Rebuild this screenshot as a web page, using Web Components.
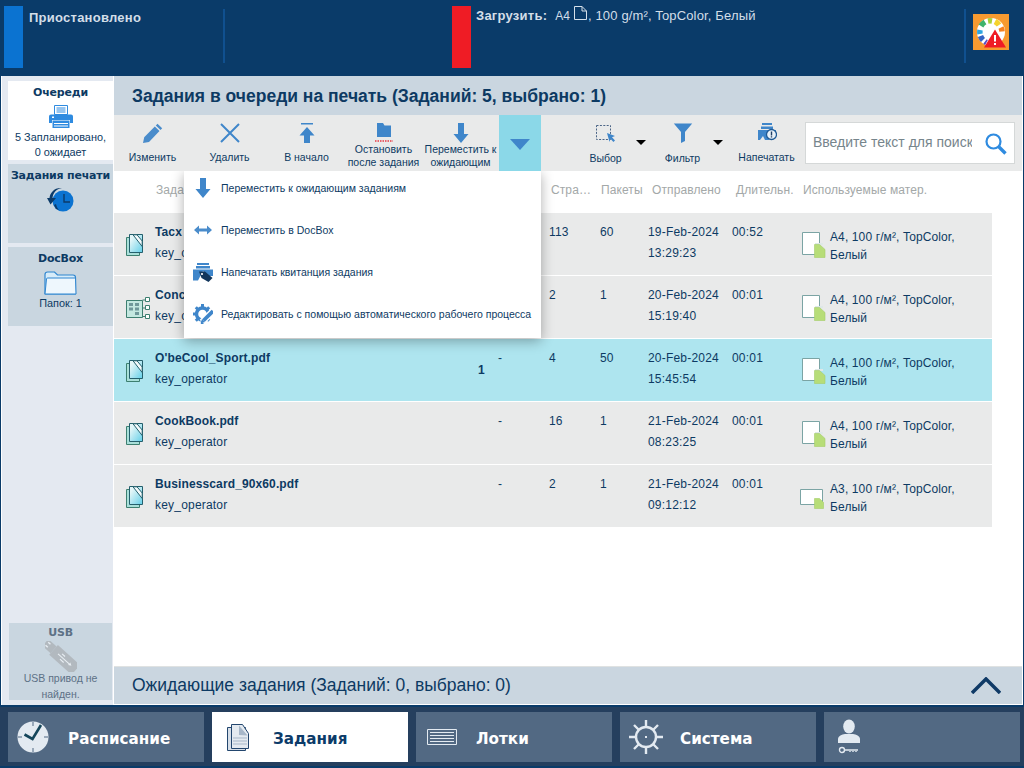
<!DOCTYPE html>
<html lang="ru">
<head>
<meta charset="utf-8">
<title>Задания</title>
<style>
  html, body { margin: 0; height: 100%; }
  body {
    width: 1024px; height: 768px; overflow: hidden;
    background: #0a3b69;
    display: flex; flex-direction: column;
    font-family: "Liberation Sans", Arial, sans-serif;
    color: #0d3a63;
  }
</style>
</head>
<body>
<status-bar></status-bar>
<main-area>
  <side-nav slot="side">
    <side-card active>
      <span slot="title">Очереди</span>
      <app-icon name="queue" w="24" h="23"></app-icon>
      <span slot="desc">5 Запланировано,<br>0 ожидает</span>
    </side-card>
    <side-card>
      <span slot="title">Задания печати</span>
      <app-icon name="history" w="27" h="24"></app-icon>
    </side-card>
    <side-card>
      <span slot="title">DocBox</span>
      <app-icon name="folder" w="33" h="24"></app-icon>
      <span slot="desc">Папок: 1</span>
    </side-card>
    <side-card usb>
      <span slot="title">USB</span>
      <app-icon name="usb" w="32" h="31"></app-icon>
      <span slot="desc">USB привод не найден.</span>
    </side-card>
  </side-nav>
  <job-panel></job-panel>
</main-area>
<nav-bar>
  <nav-tab icon="clock" label="Расписание"></nav-tab>
  <nav-tab icon="jobs" label="Задания" active></nav-tab>
  <nav-tab icon="trays" label="Лотки"></nav-tab>
  <nav-tab icon="wheel" label="Система"></nav-tab>
  <nav-tab icon="user" label=""></nav-tab>
</nav-bar>

<script>
const ICONS = {
  pencil: [20, 20, `<path fill="#4a8ccb" d="M14.5 .8l4.700 4.400-1.700 1.800-4.700-4.400zM11.800 3.600l4.700 4.400L6 19 0 20l1.200-5.800z"/>`],
  cross: [20, 20, `<path stroke="#3f86ca" stroke-width="2" fill="none" d="M1 1l18 18M19 1L1 19"/>`],
  top: [16, 20, `<path fill="#3f86ca" d="M2 0h12v1.500H2zM8 4l7.500 8.500H11V20H5v-7.500H.5z"/>`],
  stop: [18, 20, `<path fill="#3f86ca" d="M2 0h6l1.500 2.500H16V14H2z"/><path fill="#e9eaea" d="M9.500 1h6.500v1H9.500z"/><path stroke="#e8656c" stroke-width="2" stroke-dasharray="1.500 1" d="M0 18h18"/>`],
  down: [16, 20, `<path fill="#3f86ca" d="M5 0h6v11h4.500L8 20 .5 11H5z"/>`],
  select: [20, 20, `<rect x=".5" y="2.500" width="14" height="14" fill="none" stroke="#4a6486" stroke-dasharray="2 1.400"/><path fill="#3f86ca" d="M11 10l8 3-3 1.200 3 3.300-1.600 1.500-3-3.300L13.500 19z"/>`],
  filter: [20, 20, `<path fill="#3f86ca" d="M.8 .5h18.400L12 9v9l-4 2V9z"/>`],
  print: [20, 20, `<path fill="#3f86ca" d="M5 0h10v2H5zM4 3.500h12V6H4zM1 7h18v3a6 6 0 0 0-7 7H8l-2-4-3 4H1z"/><circle cx="14.500" cy="11.500" r="5" fill="#e8f1f8" stroke="#1f5a95" stroke-width="1.300"/><path stroke="#1f3f66" stroke-width="1.400" d="M14.500 8.500v4M14.500 13.200v1.200"/>`],
  search: [22, 22, `<circle cx="8.500" cy="8.500" r="7" fill="none" stroke="#2f8be0" stroke-width="2.200"/><path stroke="#2f8be0" stroke-width="3.400" d="M13.500 13.500l7 7"/>`],
  move: [18, 10, `<path fill="#4a8ccb" d="M0 5l5-4.500V3.500h8V.500L18 5l-5 4.500V6.500H5v3z"/>`],
  receipt: [20, 19, `<path fill="#3f86ca" d="M4 0h12v2H4zM3 3h14v2.500H3zM0 6.500h20V13H15l-5-5-5 9.500H0z"/><path fill="#12365c" d="M6 8.500h6l7.500 6.500-4 4L8.500 15z"/><circle cx="9" cy="11" r="1.100" fill="#fff"/>`],
  cog: [20, 20, `<g stroke="#3f86ca" fill="none"><circle cx="9.500" cy="10" r="6" stroke-width="3.400"/><path stroke-width="3" d="M9.500 0v4M9.500 16v4M0 10h4M15 10h4M2.800 3.300l3 3M13.200 13.700l3 3M16.200 3.300l-3 3M5.800 13.700l-3 3"/></g><path stroke="#fff" stroke-width="6.500" d="M20 7L9 18"/><path stroke="#3f86ca" stroke-width="3.800" d="M20 7L10.500 16.500"/><path fill="#3f86ca" d="M9 15l3 3-4.500 1.500z"/>`],
  queue: [24, 23, `<path fill="#fff" stroke="#2f8be0" d="M5.500 .5h13v9h-13z"/><path stroke="#2f8be0" d="M7.500 3h9M7.500 5h9M7.500 7h9"/><path fill="#2f8be0" d="M2 9.500h20a2 2 0 0 1 2 2V18h-3v-3H3v3H0v-6.500a2 2 0 0 1 2-2z"/><path fill="#2f8be0" d="M3.500 15.500h17V23h-17z"/><path fill="#fff" d="M5 18h14v1H5zM5 20.500h14v1H5z"/><rect x="3" y="11.500" width="2" height="1.500" fill="#fff"/>`],
  history: [27, 24, `<circle cx="16" cy="13" r="10.500" fill="#0b73d1"/><path stroke="#0c3b69" stroke-width="1.400" fill="none" d="M17 6v8h6"/><path fill="#0c3b69" d="M15 0c-6 1-9 5-9.500 10H9L3.500 16.500 0 10h2.500C3 5 7 0 13.500 0z"/><path fill="#0c3b69" d="M9 16c.5 3 2 5 3 6l-3-1-2-4z"/>`],
  folder: [33, 24, `<path fill="#d7ecf9" stroke="#2f86d0" stroke-width="1.200" d="M1 3.500c0-1.500 1-2.500 2.500-2.500h7l3 3H29c1.500 0 2.500 1 2.500 2.500V23H1z"/><path fill="#eef7fd" stroke="#2f86d0" d="M1 23l1.500-15c0-.8.500-1 1-1h28l.5 16z"/>`],
  usb: [32, 31, `<g transform="rotate(42 16 15.500)"><rect x="-5" y="11" width="11" height="9" fill="#b2b9bf"/><rect x="6" y="9" width="30" height="13" fill="#b2b9bf"/><path stroke="#e8eef3" stroke-width="1.100" fill="none" d="M12 15.500h15M15 12.800h4M17 18.200h5"/><path fill="#e8eef3" d="M27 13.800l3 1.700-3 1.700zM-3 12.800h3v1.400h-3zM-3 16.800h3v1.400h-3z"/></g>`],
  clock: [32, 32, `<circle cx="16" cy="16" r="15.500" fill="#e3eaf1"/><path stroke="#4f6781" d="M16 1v4M16 27v4M1 16h4M27 16h4"/><path stroke="#14455a" stroke-width="2.600" fill="none" d="M7.500 13.500l8 4.500 8.500-14"/>`],
  jobs: [22, 27, `<path fill="#d7dfe8" stroke="#23466e" d="M.5 3.500h18v23H.5z"/><path fill="#e4eaf0" stroke="#23466e" d="M4.500.5h11l6 9v15h-17z"/><path fill="#a7b7c9" d="M12 1.500l8.500 10-8.500-.5z"/><path stroke="#a7b7c9" d="M6 14h14M6 17h14M6 20h14"/>`],
  trays: [30, 16, `<path fill="none" stroke="#e3eaf1" d="M.5.500h29v15H.5z"/><path stroke="#e3eaf1" d="M3 3.500h24M3 6.500h24M3 9.500h24M3 12.500h24"/>`],
  wheel: [34, 34, `<circle cx="17" cy="17" r="10" fill="none" stroke="#e3eaf1" stroke-width="2.400"/><path stroke="#e3eaf1" stroke-width="2.400" d="M17 0v7M17 27v7M0 17h7M27 17h7M5 5l5 5M24 24l5 5M29 5l-5 5M10 24l-5 5"/><path fill="#e3eaf1" d="M16 16h2v2h-2z"/>`],
  user: [22, 35, `<ellipse cx="11" cy="7.500" rx="5.800" ry="7" fill="#e3eaf1"/><path fill="#e3eaf1" d="M0 24v-4c0-3 4-4.500 7-5h8c3 .5 7 2 7 5v4z"/><circle cx="4" cy="31" r="2.500" fill="none" stroke="#e3eaf1" stroke-width="1.400"/><path stroke="#e3eaf1" stroke-width="1.400" d="M7 31h13M12 33v-1M15 33v-1M18 33v-1"/>`],
  doc: [17, 22, `<defs><linearGradient id="g" x1="0" y1="0" x2="1" y2="1"><stop offset=".2" stop-color="#e4f6f8"/><stop offset="1" stop-color="#62cfe8"/></linearGradient></defs><path fill="#a9e0da" stroke="#3d7f70" d="M.5 3.500h13v18H.5z"/><path fill="url(#g)" stroke="#245f6c" d="M3.500.5h13v18h-13z"/><path stroke="#245f6c" fill="#f5fbfc" d="M7 .8l9.200 11.700V7L11 .8z"/>`],
  flow: [24, 22, `<path fill="#c4e8e0" stroke="#3d7f70" d="M.5 3.500h16v17H.5z"/><path fill="#6f989a" d="M3 6h4v3H3zM9 6h4v3H9zM9 10.500h4v3H9zM3 10.500h4v3H3zM9 15h4v3H9z"/><path fill="#fff" stroke="#3d7f70" d="M19.500.5h4v4h-4zM19.500 8.500h4v4h-4zM19.500 17.500h4v4h-4z"/><path stroke="#3d7f70" d="M16.500 3h3M16.500 11h3M16.500 19.500h3"/>`],
  sheet: [24, 26, `<path fill="#fff" stroke="#7ba4a4" d="M.5.500h17v22H.5z"/><path fill="#dfe8e8" d="M13 11h8v2h-8z"/><path fill="#b7dd78" stroke="#a4cc6a" stroke-width=".6" d="M12.500 12.500h5l5.500 5v8h-10.500z"/>`],
  sheetwide: [25, 21, `<path fill="#fff" stroke="#7ba4a4" d="M.5 1.500h22v15H.5z"/><path fill="#b7dd78" stroke="#a4cc6a" stroke-width=".6" d="M14.500 10.500h5l4 4v6h-9z"/>`],
  page: [13, 14, `<path fill="none" stroke="#d5e0ea" d="M.5.5h7.500l4.500 4.500v8.500H.5zM8 .5v4.500h4.500"/>`],
  gauge: [36, 36, `<rect width="36" height="36" fill="#f79a30"/><circle cx="18" cy="18" r="14" fill="#fff"/><g fill="none" stroke-width="5.500"><path stroke="#2ea5e0" d="M7 20a11.500 11.500 0 0 1 0-4"/><path stroke="#3fb36c" d="M8 12a11.500 11.500 0 0 1 4-4"/><path stroke="#a8d13c" d="M15 7a11.500 11.500 0 0 1 4 0"/><path stroke="#f6d32e" d="M22 7.500a11.500 11.500 0 0 1 4 3.500"/><path stroke="#f58020" d="M28 13.500a11.500 11.500 0 0 1 1 4"/><path stroke="#3564c4" d="M7.500 22a11.500 11.500 0 0 0 2.500 4"/><path stroke="#5a4fc4" d="M12 27.500a11.500 11.500 0 0 0 1.500 1"/></g><path fill="#ef1c25" d="M22 15.500L33 33.500H11z"/><path stroke="#fff" stroke-width="2" d="M22 21v6.500M22 29v2"/>`]
};

function svgIcon(name, w, h) {
  const [vw, vh, body] = ICONS[name];
  return `<svg xmlns="http://www.w3.org/2000/svg" width="${w || vw}" height="${h || vh}" viewBox="0 0 ${vw} ${vh}" style="display:block">${body}</svg>`;
}

class AppIcon extends HTMLElement {
  connectedCallback() {
    const root = this.attachShadow({ mode: 'open' });
    root.innerHTML = `<style>:host { display: block; }</style>` +
      svgIcon(this.getAttribute('name'), this.getAttribute('w'), this.getAttribute('h'));
  }
}
customElements.define('app-icon', AppIcon);

class StatusBar extends HTMLElement {
  connectedCallback() {
    this.attachShadow({ mode: 'open' }).innerHTML = `
      <style>
        :host { display: flex; flex: none; height: 76px; color: #d3dee8; font-size: 13px; box-sizing: border-box; padding-left: 4px; }
        .lamp { width: 19px; height: 62px; margin-top: 6px; flex: none; }
        .blue { background: #0b73d1; }
        .red { background: #ef1c25; }
        .sep { width: 2px; height: 54px; margin-top: 9px; background: #10508f; flex: none; }
        .msg { padding: 11px 0 0 6px; line-height: 14px; font-weight: bold; letter-spacing: .25px; }
        .one { width: 194px; flex: none; }
        .gap { width: 227px; flex: none; }
        .load { width: 488px; flex: none; padding: 9px 0 0 5px; line-height: 14px; display: flex; letter-spacing: .15px; }
        .load b { letter-spacing: .25px; margin-right: 8px; }
        .load i { font-style: normal; font-size: 12px; letter-spacing: 0; }
        .load app-icon { margin: -3px 1px 0 4px; }
        .gauge { margin: 14px 0 0 7px; }
      </style>
      <div class="lamp blue"></div>
      <div class="msg one">Приостановлено</div>
      <div class="sep"></div>
      <div class="gap"></div>
      <div class="lamp red"></div>
      <div class="load"><b>Загрузить:</b><i>A4</i><app-icon name="page"></app-icon><span>, 100 g/m², TopColor, Белый</span></div>
      <div class="sep"></div>
      <app-icon class="gauge" name="gauge"></app-icon>
    `;
  }
}
customElements.define('status-bar', StatusBar);

class MainArea extends HTMLElement {
  connectedCallback() {
    this.attachShadow({ mode: 'open' }).innerHTML = `
      <style>
        :host { display: flex; flex: none; height: 629px; margin: 0 1px 0 1px; background: #fff; padding-left: 1px; position: relative; }
      </style>
      <slot name="side"></slot>
      <slot></slot>
    `;
  }
}
customElements.define('main-area', MainArea);

class SideNav extends HTMLElement {
  connectedCallback() {
    this.attachShadow({ mode: 'open' }).innerHTML = `
      <style>
        :host { display: flex; flex-direction: column; gap: 4px; width: 112px; flex: none; box-sizing: border-box; padding: 5px 0 5px 6px; background: #e4e9f1; border-right: 1px solid #fff; }
        ::slotted([usb]) { margin: auto 1px 0 1px; }
      </style>
      <slot></slot>
    `;
  }
}
customElements.define('side-nav', SideNav);

class SideCard extends HTMLElement {
  connectedCallback() {
    this.attachShadow({ mode: 'open' }).innerHTML = `
      <style>
        :host { display: flex; flex-direction: column; align-items: center; height: 79px; flex: none; background: #c9d6e0; text-align: center; }
        :host([active]) { background: #fff; }
        :host([usb]) { height: 77px; color: #5d7186; }
        .title { font: bold 11px/14px "DejaVu Sans", sans-serif; letter-spacing: -.2px; margin-top: 5px; white-space: nowrap; }
        .body { margin-top: 5px; height: 23px; display: flex; justify-content: center; }
        .desc { font-size: 10.900px; line-height: 15px; margin-top: 2px; }
        :host([usb]) .title { margin-top: 3px; }
        :host([usb]) .body { margin-top: 1px; height: 29px; }
        :host([usb]) .desc { padding: 0 4px; margin-top: 0; line-height: 16px; font-size: 10.500px; }
      </style>
      <div class="title"><slot name="title"></slot></div>
      <div class="body"><slot></slot></div>
      <div class="desc"><slot name="desc"></slot></div>
    `;
  }
}
customElements.define('side-card', SideCard);

class ToolButton extends HTMLElement {
  connectedCallback() {
    const icon = this.getAttribute('icon');
    this.attachShadow({ mode: 'open' }).innerHTML = `
      <style>
        :host { display: flex; flex-direction: column; align-items: center; width: 77px; flex: none; position: relative; font-size: 10.500px; line-height: 13px; text-align: center; color: #0d3a63; }
        .ico { height: 20px; margin-top: 8px; }
        .lbl { flex: 1; display: flex; align-items: center; white-space: nowrap; padding-top: 1px; }
        :host([two]) .lbl { padding: 0 0 2px; }
        :host([caret]) .lbl { padding-top: 3px; }
        .caret { position: absolute; left: 69px; top: 25px; width: 0; height: 0; border: 5.500px solid transparent; border-top: 5.500px solid #000; border-bottom: 0; }
      </style>
      <div class="ico">${svgIcon(icon)}</div>
      <div class="lbl"><div><slot></slot></div></div>
      ${this.hasAttribute('caret') ? '<div class="caret"></div>' : ''}
    `;
  }
}
customElements.define('tool-button', ToolButton);

class JobToolbar extends HTMLElement {
  connectedCallback() {
    this.attachShadow({ mode: 'open' }).innerHTML = `
      <style>
        :host { display: flex; flex: none; height: 56px; background: #e9eaea; position: relative; z-index: 2; }
        .more { width: 42px; background: #8bd8e8; flex: none; display: flex; align-items: center; justify-content: center; }
        .more i { display: block; width: 0; height: 0; margin-top: 2px; border: 10px solid transparent; border-top: 11px solid #3f86ca; border-bottom: 0; }
        .fill { width: 26px; flex: none; }
        .small { width: 7px; flex: none; }
        .find { box-sizing: border-box; width: 210px; height: 42px; margin-top: 7px; flex: none; background: #fff; border: 1px solid #d5d8d8; display: flex; align-items: center; padding-left: 7px; }
        .find span { display: block; width: 159px; overflow: hidden; white-space: nowrap; font-size: 14px; color: #76858c; margin-top: -2px; }
        .find div { margin-left: 13px; margin-top: 1px; }
      </style>
      <tool-button icon="pencil">Изменить</tool-button>
      <tool-button icon="cross">Удалить</tool-button>
      <tool-button icon="top">В начало</tool-button>
      <tool-button icon="stop" two>Остановить<br>после задания</tool-button>
      <tool-button icon="down" two>Переместить к<br>ожидающим</tool-button>
      <div class="more"><i></i></div>
      <div class="fill"></div>
      <tool-button icon="select" caret>Выбор</tool-button>
      <tool-button icon="filter" caret>Фильтр</tool-button>
      <div class="small"></div>
      <tool-button icon="print">Напечатать</tool-button>
      <div class="find"><span>Введите текст для поиска</span><div>${svgIcon('search')}</div></div>
    `;
  }
}
customElements.define('job-toolbar', JobToolbar);

class JobHeader extends HTMLElement {
  connectedCallback() {
    this.attachShadow({ mode: 'open' }).innerHTML = `
      <style>
        :host { display: grid; flex: none; height: 42px; grid-template-columns: 42px 395px 50px 51px 84px 67px auto; font-size: 12px; letter-spacing: .1px; line-height: 38px; color: #a3a8a8; white-space: nowrap; }
      </style>
      <div></div><div>Зада</div><div>Стра…</div><div>Пакеты</div><div>Отправлено</div><div>Длительн.</div><div>Используемые матер.</div>
    `;
  }
}
customElements.define('job-header', JobHeader);

class JobRow extends HTMLElement {
  connectedCallback() {
    const a = n => this.getAttribute(n) || '';
    const wide = a('media').startsWith('A3');
    this.attachShadow({ mode: 'open' }).innerHTML = `
      <style>
        :host { display: grid; flex: none; width: 878px; height: 62px; margin-bottom: 1px; box-sizing: border-box; padding-top: 9px;
          grid-template-columns: 41px 323px 20px 51px 51px 48px 84px 70px auto; background: #e9eaea; font-size: 12px; line-height: 21px; color: #0d3a63; white-space: nowrap; letter-spacing: .2px; }
        :host([selected]) { background: #aee5ef; }
        .ico { padding: 12px 0 0 12px; }
        b { display: block; letter-spacing: .12px; }
        .mark { font-weight: bold; padding-top: 12px; }
        .media { display: flex; }
        .pic { width: 28px; flex: none; padding-top: 10px; }
        .pic.wide { margin-left: -2px; width: 30px; padding-top: 14px; }
        .txt { line-height: 18px; padding-top: 6px; white-space: normal; width: 150px; letter-spacing: .12px; }
      </style>
      <div class="ico">${svgIcon(a('icon') || 'doc')}</div>
      <div><b>${a('name')}</b>${a('user')}</div>
      <div class="mark">${a('mark')}</div>
      <div>-</div>
      <div>${a('pages')}</div>
      <div>${a('sets')}</div>
      <div>${a('date')}<br>${a('time')}</div>
      <div>${a('length')}</div>
      <div class="media"><div class="pic ${wide ? 'wide' : ''}">${svgIcon(wide ? 'sheetwide' : 'sheet')}</div><div class="txt">${a('media')}</div></div>
    `;
  }
}
customElements.define('job-row', JobRow);

class JobMenu extends HTMLElement {
  connectedCallback() {
    const items = [
      ['down', 'Переместить к ожидающим заданиям'],
      ['move', 'Переместить в DocBox'],
      ['receipt', 'Напечатать квитанция задания'],
      ['cog', 'Редактировать с помощью автоматического рабочего процесса']
    ];
    this.attachShadow({ mode: 'open' }).innerHTML = `
      <style>
        :host { position: absolute; left: 70px; top: 95px; z-index: 1; width: 357px; box-sizing: border-box; background: #fff; box-shadow: 0 3px 12px rgba(0,0,0,.32); display: flex; flex-direction: column; gap: 8px; padding-bottom: 7px; font-size: 10.500px; color: #0d3a63; white-space: nowrap; }
        .item { display: flex; align-items: center; height: 34px; }
        .ico { width: 37px; flex: none; display: flex; justify-content: center; }
      </style>
      ${items.map(([icon, text]) => `<div class="item"><div class="ico">${svgIcon(icon)}</div><span>${text}</span></div>`).join('')}
    `;
  }
}
customElements.define('job-menu', JobMenu);

class JobPanel extends HTMLElement {
  connectedCallback() {
    const media = 'A4, 100 г/м², TopColor, Белый';
    this.attachShadow({ mode: 'open' }).innerHTML = `
      <style>
        :host { display: flex; flex-direction: column; width: 908px; flex: none; position: relative; }
        .title { flex: none; height: 38px; background: #cad6e0; font-weight: bold; font-size: 17.500px; line-height: 38px; padding: 1px 0 0 18px; color: #0d3a63; }
        .list { flex: 1; }
        .wait { flex: none; display: flex; align-items: center; justify-content: space-between; height: 37px; margin-bottom: 1px; border-top: 1px solid #dfe2e2; background: #cad6e0; font-size: 17.500px; padding: 0 21px 0 18px; color: #0d3a63; }
      </style>
      <div class="title">Задания в очереди на печать (Заданий: 5, выбрано: 1)</div>
      <job-toolbar></job-toolbar>
      <job-menu></job-menu>
      <job-header></job-header>
      <div class="list">
        <job-row name="Tacx" user="key_operator" pages="113" sets="60" date="19-Feb-2024" time="13:29:23" length="00:52" media="${media}"></job-row>
        <job-row icon="flow" name="Conc" user="key_operator" pages="2" sets="1" date="20-Feb-2024" time="15:19:40" length="00:01" media="${media}"></job-row>
        <job-row selected mark="1" name="O'beCool_Sport.pdf" user="key_operator" pages="4" sets="50" date="20-Feb-2024" time="15:45:54" length="00:01" media="${media}"></job-row>
        <job-row name="CookBook.pdf" user="key_operator" pages="16" sets="1" date="21-Feb-2024" time="08:23:25" length="00:01" media="${media}"></job-row>
        <job-row name="Businesscard_90x60.pdf" user="key_operator" pages="2" sets="1" date="21-Feb-2024" time="09:12:12" length="00:01" media="A3, 100 г/м², TopColor, Белый"></job-row>
      </div>
      <div class="wait"><span>Ожидающие задания (Заданий: 0, выбрано: 0)</span>
        <svg width="30" height="17" viewBox="0 0 30 17" style="display:block"><path d="M1 16L15 2l14 14" fill="none" stroke="#0f3a66" stroke-width="3.500"/></svg>
      </div>
    `;
  }
}
customElements.define('job-panel', JobPanel);

class NavBar extends HTMLElement {
  connectedCallback() {
    this.attachShadow({ mode: 'open' }).innerHTML = `
      <style>
        :host { display: flex; gap: 8px; flex: none; height: 59px; margin-top: 2px; box-sizing: border-box; padding: 5px 4px 4px 8px; background: #253f5e; }
      </style>
      <slot></slot>
    `;
  }
}
customElements.define('nav-bar', NavBar);

class NavTab extends HTMLElement {
  connectedCallback() {
    const icon = this.getAttribute('icon');
    const boxes = { clock: 9, jobs: 15, trays: 11, wheel: 9, user: 14 };
    const text = { clock: 60, jobs: 61, trays: 60, wheel: 60, user: 60 };
    this.attachShadow({ mode: 'open' }).innerHTML = `
      <style>
        :host { display: flex; align-items: center; width: 196px; flex: none; background: #526983; color: #fff; font: bold 15.200px "DejaVu Sans", sans-serif; white-space: nowrap; }
        :host([active]) { background: #fff; color: #0c3b69; }
        .ico { margin-left: ${boxes[icon]}px; width: ${text[icon] - boxes[icon]}px; flex: none; }
        :host([icon="user"]) .ico { margin-top: -2px; }
        span { margin-top: 4px; }
      </style>
      <div class="ico">${svgIcon(icon)}</div>
      <span>${this.getAttribute('label')}</span>
    `;
  }
}
customElements.define('nav-tab', NavTab);
</script>
</body>
</html>
